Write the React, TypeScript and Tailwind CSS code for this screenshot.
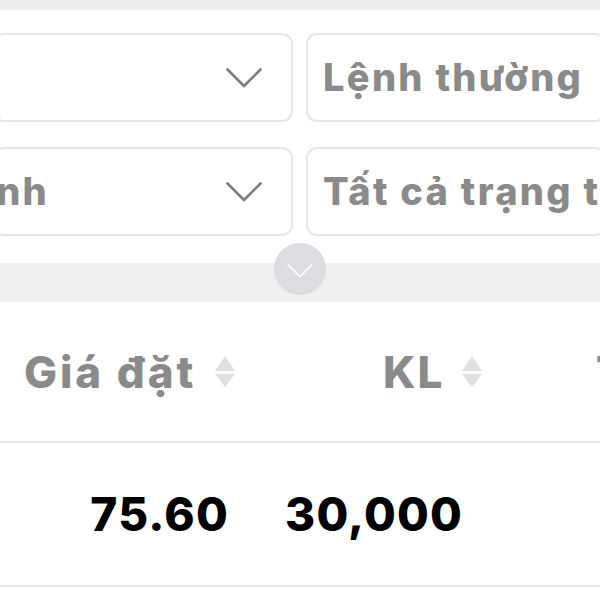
import React from 'react';

const font = { fontFamily: 'Inter, "Noto Sans", sans-serif' };

const Chevron: React.FC<{ className?: string }> = ({ className }) => (
  <svg viewBox="0 0 36 20" className={className} fill="none">
    <path d="M1.5 1.5 L18 18 L34.5 1.5" stroke="currentColor" strokeWidth="2.6" strokeLinecap="round" strokeLinejoin="round" />
  </svg>
);

const SortIcon: React.FC = () => (
  <svg viewBox="0 0 22 31" className="w-[22px] h-[31px] shrink-0">
    <path d="M11 0 L21 15 L1 15 Z" fill="#e0e0e0" />
    <path d="M1 18 L21 18 L11 31 Z" fill="#e0e0e0" />
  </svg>
);

// one select / filter field
const Field: React.FC<{ children?: React.ReactNode; chevron?: boolean; className?: string }> = ({ children, chevron, className }) => (
  <div className={`h-[89px] w-[300px] shrink-0 rounded-[11px] border-2 border-[#e6e6e6] bg-white flex items-center overflow-hidden ${className ?? ''}`}>
    {children}
    {chevron && <Chevron className="ml-auto mr-[29px] w-[36px] h-[20px] shrink-0 text-[#7d7d7d]" />}
  </div>
);

const label = 'whitespace-nowrap text-[38px] font-extrabold text-[#8a8a8a] tracking-[2.3px]';

export default function App() {
  return (
    <div className="w-[600px] h-[600px] overflow-hidden bg-white" style={font}>
      <div className="h-[10px] bg-[#ececec]" />

      {/* filters */}
      <div className="pt-[23px] flex flex-col gap-[25px]">
        <div className="flex gap-[13px] ml-[-7px]">
          <Field chevron />
          <Field className="pl-[15px]">
            <span className={label}>Lệnh thường</span>
          </Field>
        </div>
        <div className="flex gap-[13px] ml-[-7px]">
          <Field chevron>
            <span className={`${label} ml-[-37px]`}>lệnh</span>
          </Field>
          <Field className="pl-[15px]">
            <span className={label}>Tất cả trạng thái</span>
          </Field>
        </div>
      </div>

      {/* collapse band */}
      <div className="relative mt-[27px] h-[39px] bg-[#f0f0f1]">
        <div className="absolute left-[274px] top-[-20px] w-[52px] h-[52px] rounded-full bg-[#dcdce1] flex items-center justify-center">
          <Chevron className="w-[26px] h-[14px] text-white mt-[3px]" />
        </div>
      </div>

      {/* table header */}
      <div className="h-[141px] flex items-center border-b-2 border-[#e6e6e6]">
        <div className="w-[383px] shrink-0 pl-[24px] flex items-center gap-[18px]">
          <span className="text-[44px] font-extrabold text-[#8a8a8a] tracking-[2.9px]">Giá đặt</span>
          <SortIcon />
        </div>
        <div className="w-[213px] shrink-0 flex items-center gap-[17px]">
          <span className="text-[44px] font-extrabold text-[#8a8a8a] tracking-[2px]">KL</span>
          <SortIcon />
        </div>
        <span className="shrink-0 text-[44px] font-extrabold text-[#8a8a8a]">T</span>
      </div>

      {/* data row */}
      <div className="h-[144px] flex items-center border-b-2 border-[#e6e6e6]">
        <div className="w-[229px] shrink-0 text-right text-[46px] font-extrabold text-black tracking-[1.2px]">75.60</div>
        <div className="pl-[56px] text-[46px] font-extrabold text-black tracking-[1.2px]">30,000</div>
      </div>
    </div>
  );
}
